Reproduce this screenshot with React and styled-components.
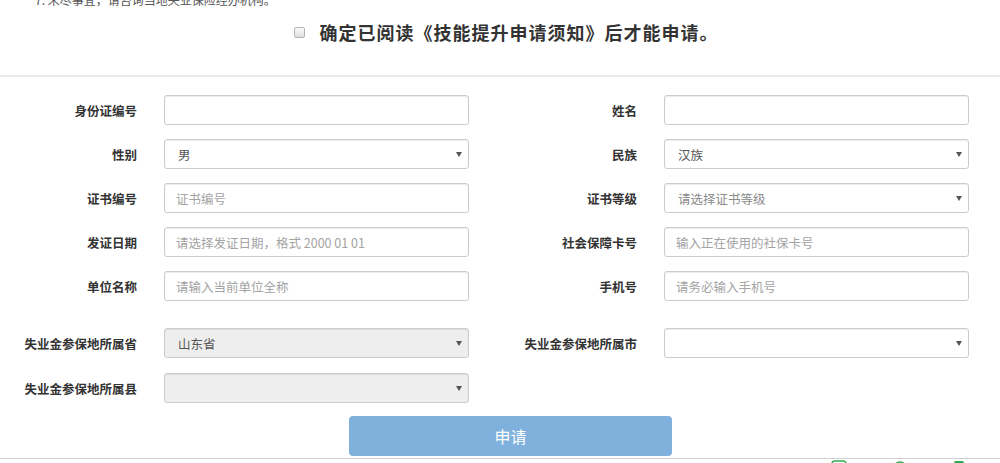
import React from "react";
import styled, { createGlobalStyle } from "styled-components";

const GlobalStyle = createGlobalStyle`
  html, body {
    margin: 0;
    padding: 0;
    background: #fff;
    overflow: hidden;
  }
  body {
    font-family: "Noto Sans CJK SC", "Liberation Sans", sans-serif;
    color: #333;
  }
`;

const Page = styled.div`
  width: 1000px;
  height: 463px;
  overflow: hidden;
`;

const Header = styled.div`
  padding-bottom: 31px;
  border-bottom: 2px solid #ececec;
`;

const Notice = styled.p`
  margin: -9px 0 0 35px;
  font-size: 12px;
  line-height: 18px;
  color: #555;
`;

const AgreeRow = styled.label`
  display: flex;
  align-items: center;
  justify-content: center;
  gap: 15px;
  margin-top: 11px;
  padding-left: 12px;
  font-size: 18px;
  line-height: 24px;
  font-weight: 700;
  letter-spacing: 1px;
  color: #333;
`;

const Check = styled.input`
  appearance: none;
  margin: 0;
  width: 11px;
  height: 11px;
  border: 1px solid #b5b5b5;
  border-radius: 2px;
  background: linear-gradient(#fbfbfb, #dedede);
`;

const Form = styled.form`
  padding-top: 18px;
`;

const Grid = styled.div`
  display: grid;
  grid-template-columns: 500px 500px;
  row-gap: ${(p) => p.$gap}px;
  margin-top: ${(p) => p.$top || 0}px;
`;

const Field = styled.div`
  display: grid;
  grid-template-columns: 137px 305px;
  column-gap: 27px;
  align-items: center;
  height: 30px;
`;

const Label = styled.span`
  text-align: right;
  font-size: 12.5px;
  font-weight: 700;
  color: #333;
  white-space: nowrap;
`;

const Input = styled.input`
  box-sizing: border-box;
  width: 100%;
  height: 30px;
  padding: 0 11px;
  border: 1px solid #ccc;
  border-radius: 3px;
  box-shadow: inset 0 1px 1px rgba(0, 0, 0, 0.075);
  font-family: inherit;
  font-size: 12.5px;
  color: #555;
  outline: none;
  &::placeholder {
    color: #a3a3a3;
  }
`;

const SelectWrap = styled.div`
  position: relative;
  height: 30px;
  &::after {
    content: "";
    position: absolute;
    right: 7px;
    top: 13px;
    border-left: 3px solid transparent;
    border-right: 3px solid transparent;
    border-top: 5px solid #555;
    pointer-events: none;
  }
`;

const Select = styled.select`
  appearance: none;
  box-sizing: border-box;
  width: 100%;
  height: 30px;
  padding: 0 13px;
  border: 1px solid #ccc;
  border-radius: 3px;
  box-shadow: inset 0 1px 1px rgba(0, 0, 0, 0.075);
  background: ${(p) => (p.disabled ? "#eee" : "#fff")};
  font-family: inherit;
  font-size: 12.5px;
  color: ${(p) => (p.$muted ? "#8a8a8a" : "#555")};
  outline: none;
  opacity: 1;
`;

const ButtonRow = styled.div`
  display: flex;
  justify-content: center;
  margin-top: 13px;
  padding-left: 21px;
`;

const Submit = styled.button`
  width: 323px;
  height: 40px;
  border: none;
  border-radius: 4px;
  background: #80b1dc;
  color: #fff;
  font-family: inherit;
  font-size: 16px;
`;

const Footer = styled.div`
  display: flex;
  justify-content: flex-end;
  gap: 46px;
  margin-top: 2px;
  padding: 1px 35px 0 0;
  border-top: 1px solid #cfcfcf;
  height: 20px;
`;

const SelectBox = ({ value, options, disabled, muted }) => (
  <SelectWrap>
    <Select defaultValue={value} disabled={disabled} $muted={muted}>
      {options.map((o) => (
        <option key={o} value={o}>
          {o}
        </option>
      ))}
    </Select>
  </SelectWrap>
);

const App = () => {
  return (
    <Page>
      <GlobalStyle />
      <Header>
        <Notice>7. 未尽事宜，请咨询当地失业保险经办机构。</Notice>
        <AgreeRow>
          <Check type="checkbox" />
          确定已阅读《技能提升申请须知》后才能申请。
        </AgreeRow>
      </Header>
      <Form onSubmit={(e) => e.preventDefault()}>
        <Grid $gap={14}>
          <Field>
            <Label>身份证编号</Label>
            <Input />
          </Field>
          <Field>
            <Label>姓名</Label>
            <Input />
          </Field>
          <Field>
            <Label>性别</Label>
            <SelectBox value="男" options={["男", "女"]} />
          </Field>
          <Field>
            <Label>民族</Label>
            <SelectBox value="汉族" options={["汉族"]} />
          </Field>
          <Field>
            <Label>证书编号</Label>
            <Input placeholder="证书编号" />
          </Field>
          <Field>
            <Label>证书等级</Label>
            <SelectBox value="请选择证书等级" options={["请选择证书等级"]} muted />
          </Field>
          <Field>
            <Label>发证日期</Label>
            <Input placeholder="请选择发证日期，格式 2000 01 01" />
          </Field>
          <Field>
            <Label>社会保障卡号</Label>
            <Input placeholder="输入正在使用的社保卡号" />
          </Field>
          <Field>
            <Label>单位名称</Label>
            <Input placeholder="请输入当前单位全称" />
          </Field>
          <Field>
            <Label>手机号</Label>
            <Input placeholder="请务必输入手机号" />
          </Field>
        </Grid>
        <Grid $gap={15} $top={27}>
          <Field>
            <Label>失业金参保地所属省</Label>
            <SelectBox value="山东省" options={["山东省"]} disabled />
          </Field>
          <Field>
            <Label>失业金参保地所属市</Label>
            <SelectBox value="" options={[""]} />
          </Field>
          <Field>
            <Label>失业金参保地所属县</Label>
            <SelectBox value="" options={[""]} disabled />
          </Field>
        </Grid>
        <ButtonRow>
          <Submit type="submit">申请</Submit>
        </ButtonRow>
      </Form>
      <Footer>
        <svg width="16" height="16" viewBox="0 0 16 16">
          <rect x="1" y="1" width="14" height="14" rx="3" fill="none" stroke="#2fa84f" strokeWidth="1.5" />
        </svg>
        <svg width="14" height="16" viewBox="0 0 14 16">
          <circle cx="7" cy="8" r="6" fill="none" stroke="#2fa84f" strokeWidth="1.5" />
        </svg>
        <svg width="12" height="16" viewBox="0 0 12 16">
          <rect x="1" y="1" width="10" height="14" rx="2" fill="#2fa84f" />
        </svg>
      </Footer>
    </Page>
  );
};

export default App;
